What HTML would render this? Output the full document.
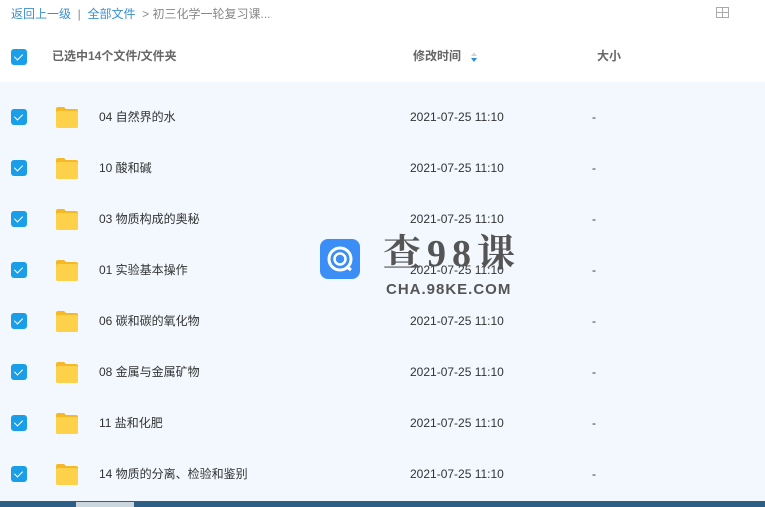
<!DOCTYPE html>
<html><head><meta charset="utf-8"><style>
body{margin:0;width:765px;height:507px;overflow:hidden;background:#fff;font-family:"Liberation Sans","Noto Sans CJK SC",sans-serif;position:relative}
.crumb{position:absolute;top:6px;left:11px;font-size:12px;color:#3b8fcf;white-space:nowrap;line-height:16px}
.crumb .g{color:#888}
.hdr{position:absolute;top:49px;font-size:12px;font-weight:bold;color:#666;line-height:14px}
.list{position:absolute;top:82px;left:0;width:765px;height:419px;background:#f2f8fd}
.cb{position:absolute;left:11px;width:16px;height:16px;border-radius:3px;background:#1a9ee8}
.cb:after{content:"";position:absolute;left:5px;top:2.5px;width:4px;height:7px;border:solid #fff;border-width:0 1.6px 1.6px 0;transform:rotate(45deg)}
.row{position:absolute;left:0;width:765px;height:51px;font-size:12px;color:#333;line-height:14px}
.row .cb{top:17px}
.fold{position:absolute;left:55px;top:14px;width:24px;height:22px}
.nm{position:absolute;left:99px;top:18px}
.tm{position:absolute;left:410px;top:18px}
.sz{position:absolute;left:592px;top:18px}
.task{position:absolute;left:0;top:501px;width:765px;height:6px;background:#2d5f86}
</style></head><body>
<div class="crumb">返回上一级 <span class="g">&nbsp;|&nbsp;</span> 全部文件 <span class="g">&nbsp;&gt; 初三化学一轮复习课...</span></div>
<svg style="position:absolute;left:716px;top:7px" width="14" height="12"><rect x="0.5" y="0.5" width="12" height="10" fill="none" stroke="#aaa"/><line x1="0" y1="5.5" x2="13" y2="5.5" stroke="#aaa"/><line x1="6.5" y1="0" x2="6.5" y2="11" stroke="#aaa"/></svg>
<div class="cb" style="top:49px"></div>
<div class="hdr" style="left:52px">已选中14个文件/文件夹</div>
<div class="hdr" style="left:413px">修改时间</div>
<svg style="position:absolute;left:470px;top:52px" width="8" height="11"><path d="M1 4L4 0.5L7 4Z" fill="#c9d6e2"/><path d="M1 6L4 10L7 6Z" fill="#2a8fd8"/></svg>
<div class="hdr" style="left:597px">大小</div>
<div class="list"></div>
<div id="rows"></div>
<script>
var n=["04 自然界的水","10 酸和碱","03 物质构成的奥秘","01 实验基本操作","06 碳和碳的氧化物","08 金属与金属矿物","11 盐和化肥","14 物质的分离、检验和鉴别"];
var h="";n.forEach(function(t,i){h+='<div class="row" style="top:'+(92+i*51)+'px"><div class="cb"></div><svg class="fold" viewBox="0 0 24 22"><path d="M1 3a2 2 0 0 1 2-2h6l2 2h10a2 2 0 0 1 2 2v15a2 2 0 0 1-2 2H3a2 2 0 0 1-2-2z" fill="#f5b826"/><rect x="1" y="5" width="22" height="17" rx="2" fill="#fdd14a"/></svg><div class="nm">'+t+'</div><div class="tm">2021-07-25 11:10</div><div class="sz">-</div></div>'});
document.getElementById("rows").innerHTML=h;
</script>
<div style="position:absolute;left:320px;top:239px;width:40px;height:40px;border-radius:8px;background:#3a8ef5"><svg width="40" height="40"><circle cx="20" cy="20" r="11" fill="none" stroke="#fff" stroke-width="3"/><circle cx="20" cy="20" r="5.5" fill="none" stroke="#fff" stroke-width="2.5"/><path d="M27 28l4 3" stroke="#fff" stroke-width="3"/></svg></div>
<div style="position:absolute;left:383px;top:232px;font-size:38px;font-weight:bold;color:#555;letter-spacing:6px;font-family:'Liberation Serif','Noto Serif CJK SC',serif;line-height:44px">查98课</div>
<div style="position:absolute;left:386px;top:281px;font-size:15px;color:#555;font-weight:bold;letter-spacing:1px">CHA.98KE.COM</div>
<div class="task"></div>
<div style="position:absolute;left:76px;top:502px;width:58px;height:5px;background:#ccd6de"></div>
</body></html>
